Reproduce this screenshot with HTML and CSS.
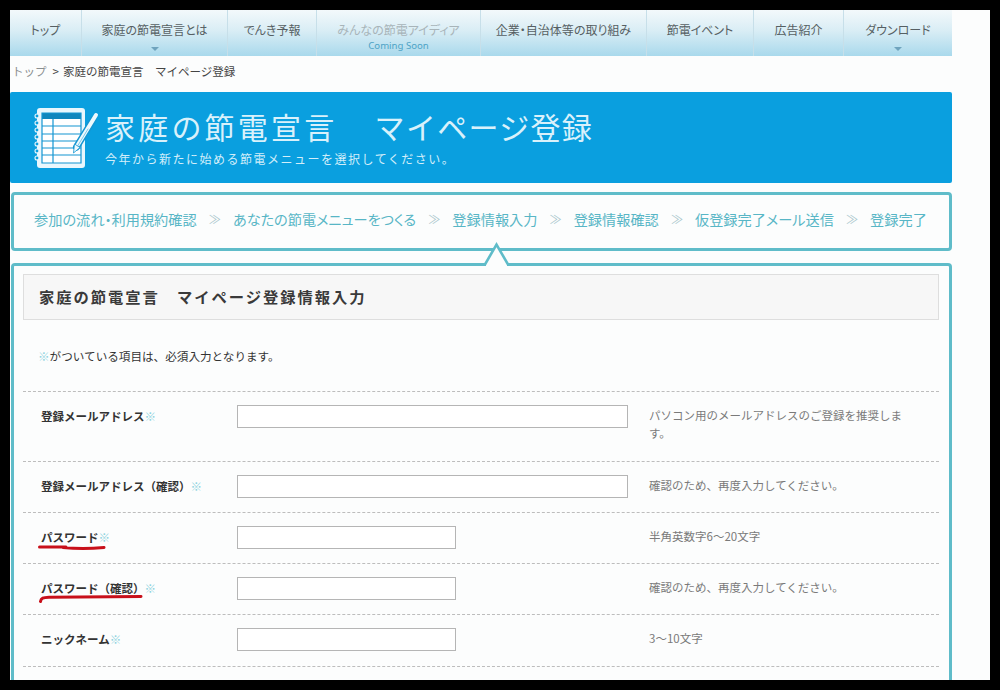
FILE: index.html
```html
<!DOCTYPE html>
<html lang="ja">
<head>
<meta charset="utf-8">
<title>家庭の節電宣言 マイページ登録</title>
<link rel="stylesheet" href="styles.css">
</head>
<body>
<div class="page">
  <div class="wrap">
    <nav class="nav">
      <a class="nav-item">トップ</a>
      <a class="nav-item">家庭の節電宣言とは<i class="caret"></i></a>
      <a class="nav-item">でんき予報</a>
      <a class="nav-item is-off">みんなの節電アイディア<small class="soon">Coming Soon</small></a>
      <a class="nav-item">企業・自治体等の取り組み</a>
      <a class="nav-item">節電イベント</a>
      <a class="nav-item">広告紹介</a>
      <a class="nav-item">ダウンロード<i class="caret"></i></a>
    </nav>
    <p class="crumb"><span class="crumb-top">トップ</span><span class="crumb-gt">&gt;</span>家庭の節電宣言　マイページ登録</p>
    <header class="banner">
      <svg class="banner-icon" viewBox="0 0 67 64" aria-hidden="true">
        <rect x="4" y="1" width="48" height="60" rx="3" fill="#e9f7fd"/>
        <rect x="9" y="6" width="39" height="50" fill="#fff"/>
        <rect x="9" y="6" width="39" height="6" fill="#0f86bd"/>
        <g stroke="#1496d2" stroke-width="1.200" fill="none">
          <path d="M9 6H48V56H9Z"/>
          <path d="M9 19H48M9 27H48M9 34H48M9 41H48M9 48H48M20 12V56"/>
        </g>
        <g fill="#0a9fdf" stroke="#e9f7fd" stroke-width="1.100">
          <circle cx="4" cy="9" r="2"/><circle cx="4" cy="16" r="2"/><circle cx="4" cy="23" r="2"/>
          <circle cx="4" cy="30" r="2"/><circle cx="4" cy="37" r="2"/><circle cx="4" cy="44" r="2"/><circle cx="4" cy="51" r="2"/>
        </g>
        <g fill="none" stroke-linecap="round">
          <path d="M60 13 43.500 40" stroke="#1496d2" stroke-width="7"/>
          <path d="M63 8 43.500 40" stroke="#eef9fd" stroke-width="4"/>
          <path d="M55 22 44 40" stroke="#7cc9ea" stroke-width="1"/>
        </g>
        <path d="M40.500 46 41.500 37 47 40.500Z" fill="#eef9fd" stroke="#1496d2" stroke-width=".8"/>
      </svg>
      <div class="banner-text">
        <h1 class="banner-title"><span class="title-a">家庭の節電宣言　</span><span class="title-b">マイページ登録</span></h1>
        <p class="banner-sub">今年から新たに始める節電メニューを選択してください。</p>
      </div>
    </header>
    <ol class="steps">
      <li>参加の流れ・利用規約確認</li><li class="sep">≫</li>
      <li>あなたの節電メニューをつくる</li><li class="sep">≫</li>
      <li>登録情報入力</li><li class="sep">≫</li>
      <li>登録情報確認</li><li class="sep">≫</li>
      <li>仮登録完了メール送信</li><li class="sep">≫</li>
      <li>登録完了</li>
    </ol>
    <main class="panel">
      <svg class="notch" viewBox="0 0 30 26" aria-hidden="true">
        <path d="M3 22H24V26H3Z" fill="#fcfdfd"/>
        <path d="M0 23.500H2L13.500 3.500 25 23.500H28" fill="#fcfdfd" stroke="#5fbcc9" stroke-width="2.600"/>
      </svg>
      <h2 class="panel-title">家庭の節電宣言　マイページ登録情報入力</h2>
      <p class="req"><span class="mark">※</span>がついている項目は、必須入力となります。</p>
      <div class="rows">
        <div class="row row-tall">
          <label class="label">登録メールアドレス<span class="mark">※</span></label>
          <div class="field"><input class="input"></div>
          <p class="hint">パソコン用のメールアドレスのご登録を推奨します。</p>
        </div>
        <div class="row">
          <label class="label">登録メールアドレス（確認）<span class="mark">※</span></label>
          <div class="field"><input class="input"></div>
          <p class="hint">確認のため、再度入力してください。</p>
        </div>
        <div class="row">
          <label class="label marked">パスワード<span class="mark">※</span>
            <svg class="scrawl scrawl-a" viewBox="0 0 68 6" aria-hidden="true"><path d="M1.500 3H28M25 3.500C40 5 55 4.500 66 3.500"/></svg>
          </label>
          <div class="field"><input class="input input-short"></div>
          <p class="hint">半角英数字6～20文字</p>
        </div>
        <div class="row">
          <label class="label marked">パスワード（確認）<span class="mark">※</span>
            <svg class="scrawl scrawl-b" viewBox="0 0 104 9" aria-hidden="true"><path d="M1.500 7.500C2 4 4 3.500 10 3.200L102 2.500"/></svg>
          </label>
          <div class="field"><input class="input input-short"></div>
          <p class="hint">確認のため、再度入力してください。</p>
        </div>
        <div class="row">
          <label class="label">ニックネーム<span class="mark">※</span></label>
          <div class="field"><input class="input input-short"></div>
          <p class="hint">3～10文字</p>
        </div>
        <div class="row row-end"></div>
      </div>
    </main>
  </div>
</div>
</body>
</html>
```
FILE: styles.css
```css
* { box-sizing: border-box; }
html, body { margin: 0; height: 690px; overflow: hidden; }
body {
  padding: 10px;
  background: #000;
  font-family: "Noto Sans CJK JP", "Liberation Sans", sans-serif;
  color: #333;
}
.page { width: 980px; height: 670px; background: #fcfdfd; overflow: hidden; }
.wrap { width: 942px; }

.nav {
  display: grid;
  grid-template-columns: 72px 146px 89px 164px 166px 107px 90px 108px;
  height: 46px;
  background: linear-gradient(#f3f9fb 0%, #d9edf5 45%, #a9d9ec 100%);
}
.nav-item {
  position: relative;
  display: block;
  padding-top: 11px;
  border-right: 1px solid #c7dfe9;
  text-align: center;
  font-size: 12px;
  font-feature-settings: "palt";
  line-height: 18px;
  color: #565f63;
}
.nav-item:last-child { border-right: 0; }
.is-off { color: #a8b4b9; }
.soon {
  display: block;
  margin-top: 1px;
  font-size: 9.600px;
  line-height: 12px;
  color: #4ea3c6;
  font-family: "Noto Sans", sans-serif;
}
.caret {
  position: absolute;
  left: 50%;
  bottom: 5px;
  margin-left: -4px;
  border: 4px solid transparent;
  border-bottom: 0;
  border-top-color: #6fa3bd;
}

.crumb {
  margin: 0;
  height: 36px;
  padding-left: 2px;
  font-size: 11.500px;
  line-height: 30px;
  color: #444;
}
.crumb-top { color: #8a8f91; }
.crumb-gt { margin: 0 4px 0 6px; }

.banner {
  display: flex;
  height: 91px;
  padding: 15px 0 0 23px;
  background: #0a9fdf;
  border-radius: 2px;
}
.banner-icon { width: 67px; height: 64px; flex: none; }
.banner-text { margin: -1px 0 0 5px; }
.banner-title {
  margin: 0 0 3px;
  font-size: 30px;
  font-weight: 400;
  line-height: 40px;
  color: #d9f1fb;
  white-space: nowrap;
}
.title-a { letter-spacing: 3.200px; }
.title-b { margin-left: 4px; letter-spacing: 1.300px; }
.banner-sub {
  margin: 0;
  font-size: 12px;
  line-height: 20px;
  letter-spacing: 1.500px;
  color: #d3eefa;
}

.steps {
  display: flex;
  justify-content: space-between;
  align-items: center;
  height: 59px;
  margin: 9px 0 12px 1px;
  padding: 0 22px 6px 20px;
  list-style: none;
  border: 3px solid #5fbcc9;
  border-radius: 4px;
  font-size: 14.200px;
  font-feature-settings: "palt";
  line-height: 20px;
  color: #58b6c6;
  white-space: nowrap;
}
.sep { color: #a9c6cc; font-size: 12px; }

.panel {
  position: relative;
  height: 500px;
  margin-left: 1px;
  padding: 8px 10px 0 9px;
  border: 3px solid #5fbcc9;
  border-bottom: 0;
  border-radius: 4px 4px 0 0;
}
.notch {
  position: absolute;
  left: 469px;
  top: -25px;
  width: 30px;
  height: 26px;
}
.panel-title {
  display: flex;
  align-items: center;
  height: 46px;
  margin: 0;
  padding: 0 0 2px 15px;
  background: #f7f7f7;
  border: 1px solid #dedede;
  font-size: 15.300px;
  letter-spacing: 1.950px;
  font-weight: 700;
  color: #3a3a3a;
}
.req {
  margin: 0;
  height: 71px;
  padding: 26px 0 0 15px;
  font-size: 11.600px;
  line-height: 20px;
  color: #333;
}
.mark { color: #8fd3e0; }

.rows { border-top: 1px dashed #bdbdbd; }
.row {
  display: grid;
  grid-template-columns: 214px 412px 262px;
  align-items: start;
  height: 51.150px;
  padding-top: 13px;
  border-bottom: 1px dashed #bdbdbd;
}
.row-tall { height: 70px; }
.row-end { height: 40px; border-bottom: 0; }
.label {
  position: relative;
  padding-left: 18px;
  font-size: 11.500px;
  font-weight: 700;
  line-height: 22px;
  color: #333;
  white-space: nowrap;
}
.field { display: block; }
.input {
  display: block;
  width: 391px;
  height: 22.600px;
  padding: 0;
  background: #fff;
  border: 1px solid #b5b5b5;
  border-radius: 0;
}
.input-short { width: 219px; }
.hint {
  margin: 1px 0 0;
  font-size: 11.500px;
  line-height: 18px;
  color: #7a7a7a;
}
.scrawl {
  position: absolute;
  fill: none;
  stroke: #c8101a;
  stroke-width: 3;
  stroke-linecap: round;
}
.scrawl-a { left: 15px; top: 18px; width: 68px; height: 6px; }
.scrawl-b { left: 16px; top: 17px; width: 104px; height: 9px; }
```
